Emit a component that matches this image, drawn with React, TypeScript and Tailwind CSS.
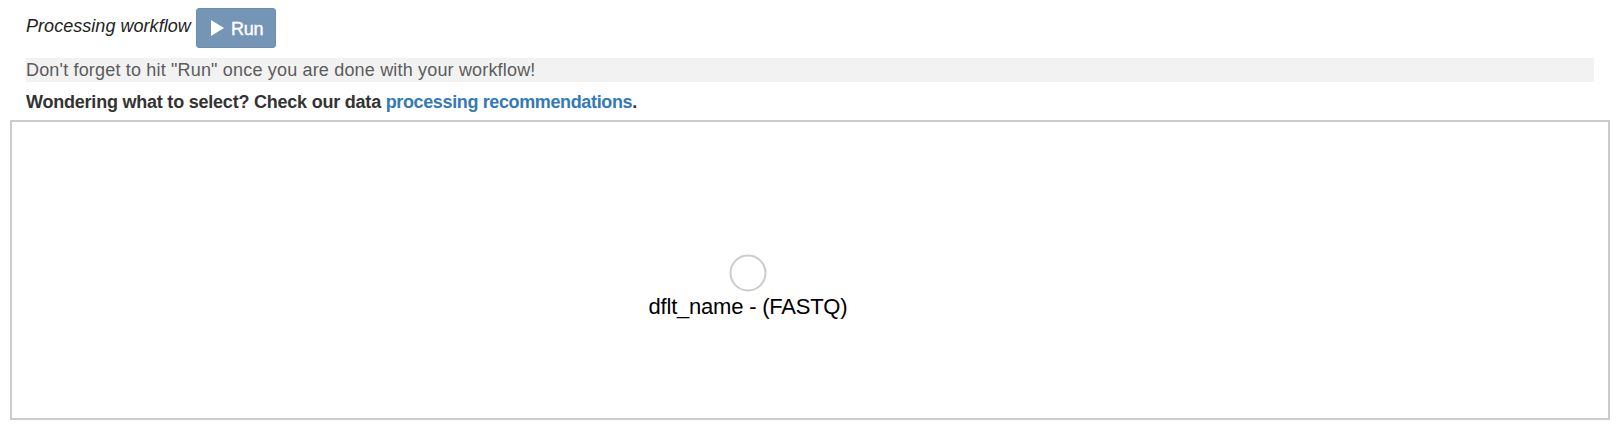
export default function App() {
  return (
    <div className="h-[430px] w-[1624px] overflow-hidden bg-white pl-[10px] font-['Liberation_Sans',Arial,sans-serif] text-[18px] text-[#333]">
      <div className="px-4">
        <div className="flex h-[58px] items-start pt-2">
          <span className="w-[170px] pt-[5px] leading-[26px] tracking-[0.04px] text-[#222] italic whitespace-nowrap">Processing workflow</span>
          <button className="flex h-10 w-20 items-center gap-[7px] rounded-[3px] border border-[#6c8fb0] bg-[#7495b5] pl-[14px] text-white">
            <svg width="13" height="16" viewBox="0 0 13 16"><path d="M0 0L13 8L0 16Z" fill="currentColor" /></svg>
            <span className="pt-[3px] tracking-[-0.3px] [-webkit-text-stroke:0.4px_white]">Run</span>
          </button>
        </div>
        <p className="h-6 w-[1568px] bg-[#f2f2f2] leading-6 tracking-[0.175px] text-[#5c5c5c]">Don't forget to hit "Run" once you are done with your workflow!</p>
        <p className="mt-2 h-[30px] leading-6 font-bold tracking-[-0.22px]">Wondering what to select? Check our data <a className="tracking-[-0.37px] text-[#337ab7]">processing recommendations</a>.</p>
      </div>
      <div className="flex h-[300px] w-[1600px] flex-col items-center border-2 border-[#ccc] pt-[132px] pr-[124px]">
        <svg width="38" height="38"><circle cx="19" cy="19" r="17.5" fill="white" stroke="#ccc" strokeWidth="2" /></svg>
        <span className="-mt-px text-[22px] leading-8 tracking-[-0.22px] text-black">dflt_name - (FASTQ)</span>
      </div>
    </div>
  );
}
